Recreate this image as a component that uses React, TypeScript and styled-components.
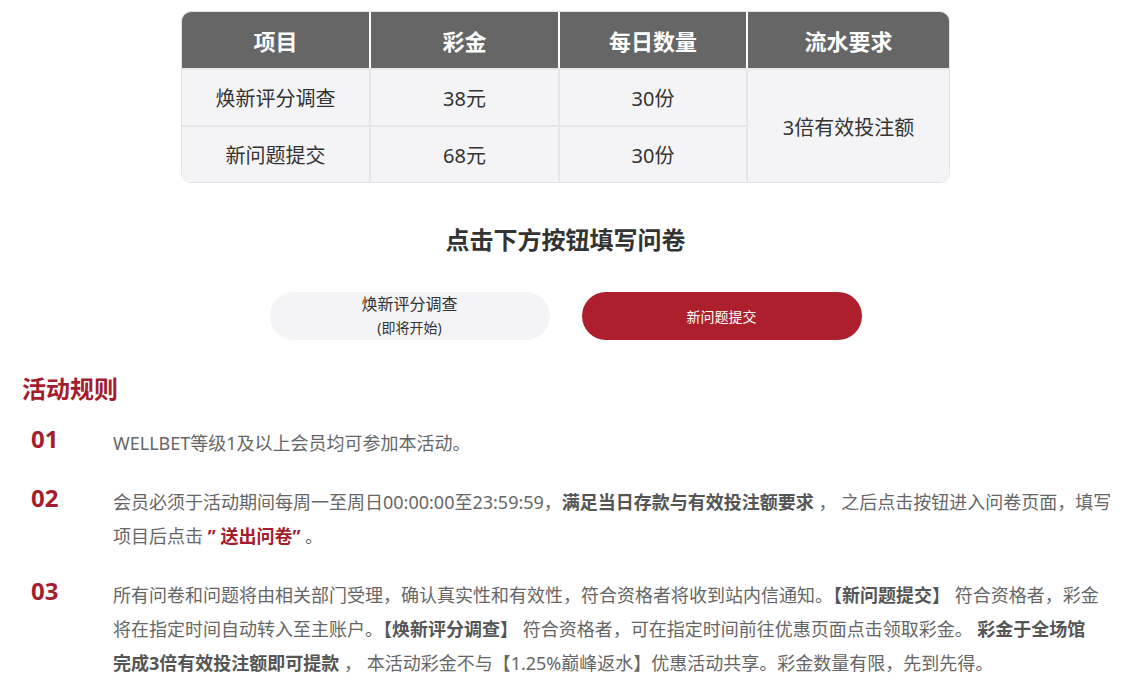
import styled, { createGlobalStyle } from 'styled-components';

const GlobalStyle = createGlobalStyle`
  body {
    margin: 0;
    background: #ffffff;
    font-family: 'Noto Sans', 'Noto Sans CJK SC', sans-serif;
  }
`;

const Page = styled.div`
  width: 1135px;
  padding-top: 11px;
  display: flex;
  flex-direction: column;
`;

const Center = styled.div`
  display: flex;
  flex-direction: column;
  align-items: center;
  padding-right: 4px;
`;

const Table = styled.table`
  width: 767px;
  border-collapse: separate;
  border-spacing: 0;
  border-radius: 10px;
  overflow: hidden;
  border: 1px solid #e4e4e6;
  table-layout: fixed;
  th {
    padding: 0;
    height: 56px;
    background-color: #666666;
    color: #ffffff;
    font-size: 22px;
    font-weight: 700;
    border-left: 2px solid #ffffff;
    &:first-child {
      border-left: none;
    }
  }
  td {
    padding: 0;
    height: 55px;
    background-color: #f4f4f6;
    color: #333333;
    font-size: 20px;
    text-align: center;
    border-left: 2px solid #e6e6e8;
    border-top: 2px solid #e6e6e8;
    &:first-child {
      border-left: none;
    }
  }
`;

const Col = styled.col<{ $w: number }>`
  width: ${(p) => p.$w}px;
`;

const Title = styled.h2`
  margin: 42px 0 0;
  font-size: 24px;
  line-height: 30px;
  font-weight: 700;
  color: #333333;
`;

const Buttons = styled.div`
  display: flex;
  gap: 32px;
  margin-top: 37px;
`;

const Pill = styled.div<{ $primary?: boolean }>`
  display: flex;
  flex-direction: column;
  align-items: center;
  justify-content: center;
  width: 280px;
  height: 48px;
  border-radius: 24px;
  background-color: ${(p) => (p.$primary ? '#ae1f2e' : '#f4f4f6')};
  color: ${(p) => (p.$primary ? '#ffffff' : '#333333')};
  font-size: 14px;
  line-height: 21px;
  span {
    font-size: 16px;
    line-height: 24px;
  }
  small {
    font-size: 14px;
    line-height: 24px;
  }
`;

const Rules = styled.section`
  display: flex;
  flex-direction: column;
  padding: 0 20px 0 22px;
  margin-top: 34px;
`;

const RulesTitle = styled.h3`
  margin: 0 0 22px;
  font-size: 24px;
  line-height: 30px;
  font-weight: 700;
  color: #a51d2d;
`;

const RuleList = styled.div`
  display: flex;
  flex-direction: column;
  gap: 25px;
`;

const Rule = styled.div`
  display: flex;
  align-items: flex-start;
`;

const Num = styled.div`
  flex: 0 0 91px;
  padding-left: 9px;
  box-sizing: border-box;
  font-size: 24px;
  line-height: 26px;
  font-weight: 700;
  color: #a51d2d;
`;

const Text = styled.p`
  margin: 0;
  flex: 1;
  font-size: 18px;
  line-height: 34px;
  color: #666666;
  b {
    color: #555555;
    font-weight: 700;
  }
`;

const Red = styled.b`
  && {
    color: #a51d2d;
  }
`;

const rows = [
  { name: '焕新评分调查', prize: '38元', count: '30份' },
  { name: '新问题提交', prize: '68元', count: '30份' },
];

export default function App() {
  return (
    <Page>
      <GlobalStyle />
      <Center>
        <Table>
          <colgroup>
            <Col $w={187} />
            <Col $w={189} />
            <Col $w={188} />
            <Col $w={203} />
          </colgroup>
          <thead>
            <tr>
              <th>项目</th>
              <th>彩金</th>
              <th>每日数量</th>
              <th>流水要求</th>
            </tr>
          </thead>
          <tbody>
            {rows.map((r, i) => (
              <tr key={r.name}>
                <td>{r.name}</td>
                <td>{r.prize}</td>
                <td>{r.count}</td>
                {i === 0 && <td rowSpan={2}>3倍有效投注额</td>}
              </tr>
            ))}
          </tbody>
        </Table>
        <Title>点击下方按钮填写问卷</Title>
        <Buttons>
          <Pill>
            <span>焕新评分调查</span>
            <small>(即将开始)</small>
          </Pill>
          <Pill $primary>新问题提交</Pill>
        </Buttons>
      </Center>
      <Rules>
        <RulesTitle>活动规则</RulesTitle>
        <RuleList>
          <Rule>
            <Num>01</Num>
            <Text>WELLBET等级1及以上会员均可参加本活动。</Text>
          </Rule>
          <Rule>
            <Num>02</Num>
            <Text>
              会员必须于活动期间每周一至周日00:00:00至23:59:59，<b>满足当日存款与有效投注额要求</b> ， 之后点击按钮进入问卷页面，填写项目后点击 <Red>” 送出问卷”</Red> 。
            </Text>
          </Rule>
          <Rule>
            <Num>03</Num>
            <Text>
              所有问卷和问题将由相关部门受理，确认真实性和有效性，符合资格者将收到站内信通知。<b>【新问题提交】</b> 符合资格者，彩金将在指定时间自动转入至主账户。<b>【焕新评分调查】</b> 符合资格者，可在指定时间前往优惠页面点击领取彩金。 <b>彩金于全场馆<br />完成3倍有效投注额即可提款</b> ， 本活动彩金不与【1.25%巅峰返水】优惠活动共享。彩金数量有限，先到先得。
            </Text>
          </Rule>
        </RuleList>
      </Rules>
    </Page>
  );
}
